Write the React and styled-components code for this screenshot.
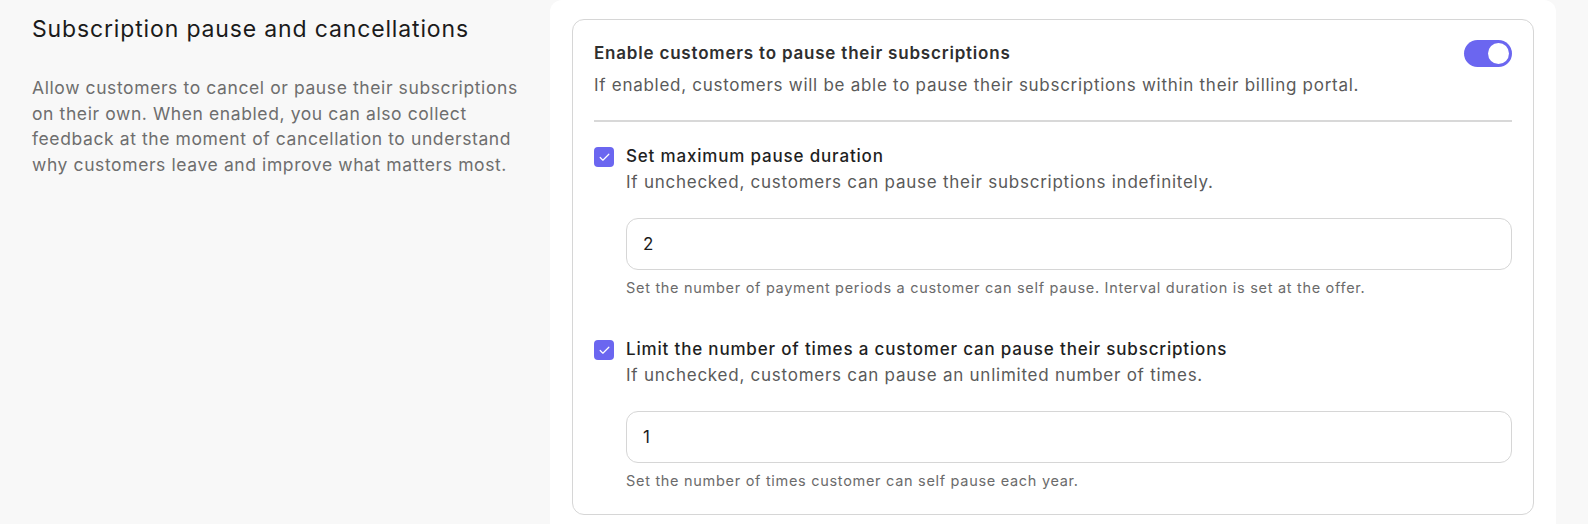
import React from "react";
import styled, { createGlobalStyle } from "styled-components";

const Global = createGlobalStyle`
  html, body { margin: 0; padding: 0; background: #f8f8f8; }
  body { font-family: Inter, "Noto Sans", sans-serif; -webkit-font-smoothing: antialiased; }
  * { box-sizing: border-box; }
`;

const Page = styled.div`
  display: flex;
  gap: 30px;
  padding: 0 32px;
  min-height: 524px;
`;

const Intro = styled.section`
  width: 488px;
  flex: none;
  padding-top: 15px;
`;

const Title = styled.h2`
  margin: 0;
  font-size: 23px;
  line-height: 28px;
  font-weight: 400;
  letter-spacing: 0.85px;
  color: #1b1b1b;
`;

const IntroText = styled.p`
  margin: 32px 0 0;
  font-size: 17.5px;
  line-height: 25.6px;
  letter-spacing: 0.6px;
  color: #6e6e6e;
`;

const Panel = styled.section`
  flex: 1;
  background: #fff;
  border-radius: 12px 12px 0 0;
  padding: 19px 22px 0;
`;

const Card = styled.div`
  border: 1px solid #d6d6d6;
  border-radius: 12px;
  padding: 21px 21px 23px;
`;

const Header = styled.div`
  display: flex;
  justify-content: space-between;
  align-items: flex-start;
  gap: 24px;
`;

const HeaderTitle = styled.div`
  font-size: 17px;
  line-height: 24px;
  font-weight: 600;
  letter-spacing: 0.8px;
  color: #2f2f2f;
`;

const HeaderText = styled.div`
  margin-top: 8px;
  font-size: 17px;
  line-height: 24px;
  letter-spacing: 0.72px;
  color: #5a5a5a;
`;

const Toggle = styled.button`
  flex: none;
  width: 48px;
  height: 27px;
  margin-top: -1px;
  border: none;
  border-radius: 14px;
  padding: 3px;
  background: ${(p) => (p.$on ? "#6b66f0" : "#d0d0d0")};
  display: flex;
  justify-content: ${(p) => (p.$on ? "flex-end" : "flex-start")};
  align-items: center;
  cursor: pointer;
`;

const Knob = styled.span`
  width: 21px;
  height: 21px;
  border-radius: 50%;
  background: #fff;
`;

const Divider = styled.hr`
  margin: 23px 0 21px;
  border: none;
  height: 2px;
  background: #d8d8d8;
`;

const Option = styled.div`
  display: flex;
  gap: 12px;
  margin-top: ${(p) => (p.$first ? "0" : "38px")};
`;

const Box = styled.span`
  flex: none;
  width: 20px;
  height: 20px;
  margin-top: 4px;
  border-radius: 4px;
  background: #6b66f0;
  display: flex;
  align-items: center;
  justify-content: center;
`;

const OptionBody = styled.div`
  flex: 1;
  min-width: 0;
`;

const OptionLabel = styled.div`
  font-size: 17px;
  line-height: 26px;
  font-weight: 500;
  letter-spacing: 0.82px;
  color: #1f1f1f;
`;

const OptionText = styled.div`
  font-size: 17px;
  line-height: 26px;
  letter-spacing: 0.75px;
  color: #5a5a5a;
`;

const Input = styled.div`
  margin-top: 23px;
  height: 52px;
  border: 1px solid #d6d6d6;
  border-radius: 12px;
  padding: 0 16px;
  display: flex;
  align-items: center;
  font-size: 17px;
  color: #1b1b1b;
`;

const Help = styled.div`
  margin-top: 8px;
  font-size: 14.5px;
  line-height: 20px;
  letter-spacing: 0.7px;
  color: #6b6b6b;
`;

const Check = () => (
  <svg width="13" height="13" viewBox="0 0 24 24" fill="none" stroke="#fff" strokeWidth="2.2" strokeLinecap="round" strokeLinejoin="round">
    <path d="M20 6 9 17l-5-5" />
  </svg>
);

const options = [
  {
    label: "Set maximum pause duration",
    text: "If unchecked, customers can pause their subscriptions indefinitely.",
    value: "2",
    help: "Set the number of payment periods a customer can self pause. Interval duration is set at the offer.",
  },
  {
    label: "Limit the number of times a customer can pause their subscriptions",
    text: "If unchecked, customers can pause an unlimited number of times.",
    value: "1",
    help: "Set the number of times customer can self pause each year.",
  },
];

export default function App() {
  return (
    <>
      <Global />
      <Page>
        <Intro>
          <Title>Subscription pause and cancellations</Title>
          <IntroText>
            Allow customers to cancel or pause their subscriptions on their own. When enabled, you can also collect
            feedback at the moment of cancellation to understand why customers leave and improve what matters most.
          </IntroText>
        </Intro>
        <Panel>
          <Card>
            <Header>
              <div>
                <HeaderTitle>Enable customers to pause their subscriptions</HeaderTitle>
                <HeaderText>
                  If enabled, customers will be able to pause their subscriptions within their billing portal.
                </HeaderText>
              </div>
              <Toggle $on aria-label="toggle">
                <Knob />
              </Toggle>
            </Header>
            <Divider />
            {options.map((o, i) => (
              <Option key={o.label} $first={i === 0}>
                <Box>
                  <Check />
                </Box>
                <OptionBody>
                  <OptionLabel>{o.label}</OptionLabel>
                  <OptionText>{o.text}</OptionText>
                  <Input>{o.value}</Input>
                  <Help>{o.help}</Help>
                </OptionBody>
              </Option>
            ))}
          </Card>
        </Panel>
      </Page>
    </>
  );
}
